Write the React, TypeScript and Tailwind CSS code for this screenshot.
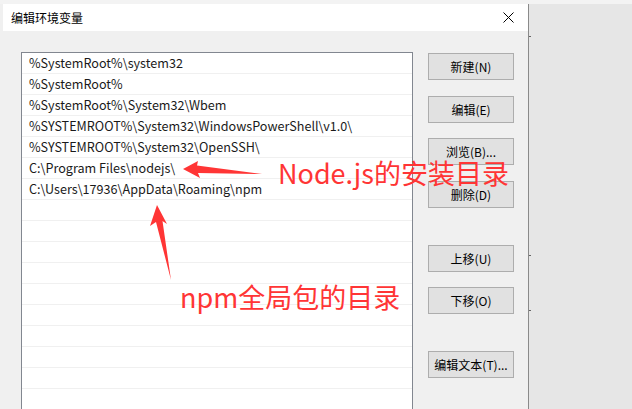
const paths = [
  '%SystemRoot%\\system32',
  '%SystemRoot%',
  '%SystemRoot%\\System32\\Wbem',
  '%SYSTEMROOT%\\System32\\WindowsPowerShell\\v1.0\\',
  '%SYSTEMROOT%\\System32\\OpenSSH\\',
  'C:\\Program Files\\nodejs\\',
  'C:\\Users\\17936\\AppData\\Roaming\\npm',
];

const buttons = [
  { label: '新建(N)', mt: 'mt-[1px]' },
  { label: '编辑(E)', mt: 'mt-[16px]' },
  { label: '浏览(B)...', mt: 'mt-[15px]' },
  { label: '删除(D)', mt: 'mt-[16px]' },
  { label: '上移(U)', mt: 'mt-[37px]' },
  { label: '下移(O)', mt: 'mt-[15px]' },
  { label: '编辑文本(T)...', mt: 'mt-[37px]' },
];

const font = { fontFamily: '"Microsoft YaHei", "Noto Sans CJK SC", sans-serif' };

export default function App() {
  const rows = [...paths, ...Array(10).fill('')];

  return (
    <div
      className="relative flex h-[409px] w-[632px] flex-col overflow-hidden bg-[#f3f3f3] text-black"
      style={font}
    >
      <div className="h-[4px] shrink-0" />
      <div className="flex min-h-0 flex-1">
        <div className="w-[3px] shrink-0 bg-[#f0f0f0]" />

        {/* dialog */}
        <div className="flex w-[526px] shrink-0 flex-col border-r border-[#8a8a8a]">
          <div className="flex h-[27px] shrink-0 items-center justify-between bg-white pl-[8px] pr-[10px]">
            <span className="text-[12px] leading-none">编辑环境变量</span>
            <svg width="11" height="11" viewBox="0 0 11 11" className="mr-[4px]">
              <path d="M0.5 0.5 L10.5 10.5 M10.5 0.5 L0.5 10.5" stroke="#000" strokeWidth="1" />
            </svg>
          </div>

          <div className="flex min-h-0 flex-1 gap-[15px] bg-[#f0f0f0] pl-[18px] pt-[21px]">
            <div className="w-[392px] shrink-0 overflow-hidden border border-b-0 border-[#828790] bg-white">
              {rows.map((p, i) => (
                <div
                  key={i}
                  className="flex h-[21px] items-center border-b border-[#f0f0f0] pl-[7px] pt-[1px] text-[12.6px] leading-none text-[#1a1a1a]"
                >
                  {p}
                </div>
              ))}
            </div>

            <div className="flex w-[86px] shrink-0 flex-col">
              {buttons.map((b) => (
                <div
                  key={b.label}
                  className={`${b.mt} flex h-[27px] items-center justify-center border border-[#adadad] bg-[#e1e1e1] text-[12px] leading-none`}
                >
                  {b.label}
                </div>
              ))}
            </div>
          </div>
        </div>

        <div className="flex-1 bg-[#e6e6e6]" />
      </div>

      {/* ticks of the window behind */}
      <div className="absolute left-[529px] top-[36px] h-[1px] w-[2px] bg-[#666]" />
      <div className="absolute left-[529px] top-[255px] h-[1px] w-[2px] bg-[#666]" />
      <div className="absolute left-[529px] top-[310px] h-[1px] w-[2px] bg-[#666]" />

      {/* annotations */}
      <svg className="pointer-events-none absolute left-0 top-0" width="632" height="409">
        <polygon points="183,169 198,161 197,165.5 262,174 198,173 200,178" fill="#ff3535" />
        <polygon points="157,205 167,224 162.5,221 171,280 156,222 150,226" fill="#ff3535" />
      </svg>
      <div className="absolute left-[278px] top-[154px] text-[27px] leading-[38px] text-[#ff3535]">
        Node.js的安装目录
      </div>
      <div className="absolute left-[180px] top-[278px] text-[27px] leading-[38px] text-[#ff3535]">
        npm全局包的目录
      </div>
    </div>
  );
}
